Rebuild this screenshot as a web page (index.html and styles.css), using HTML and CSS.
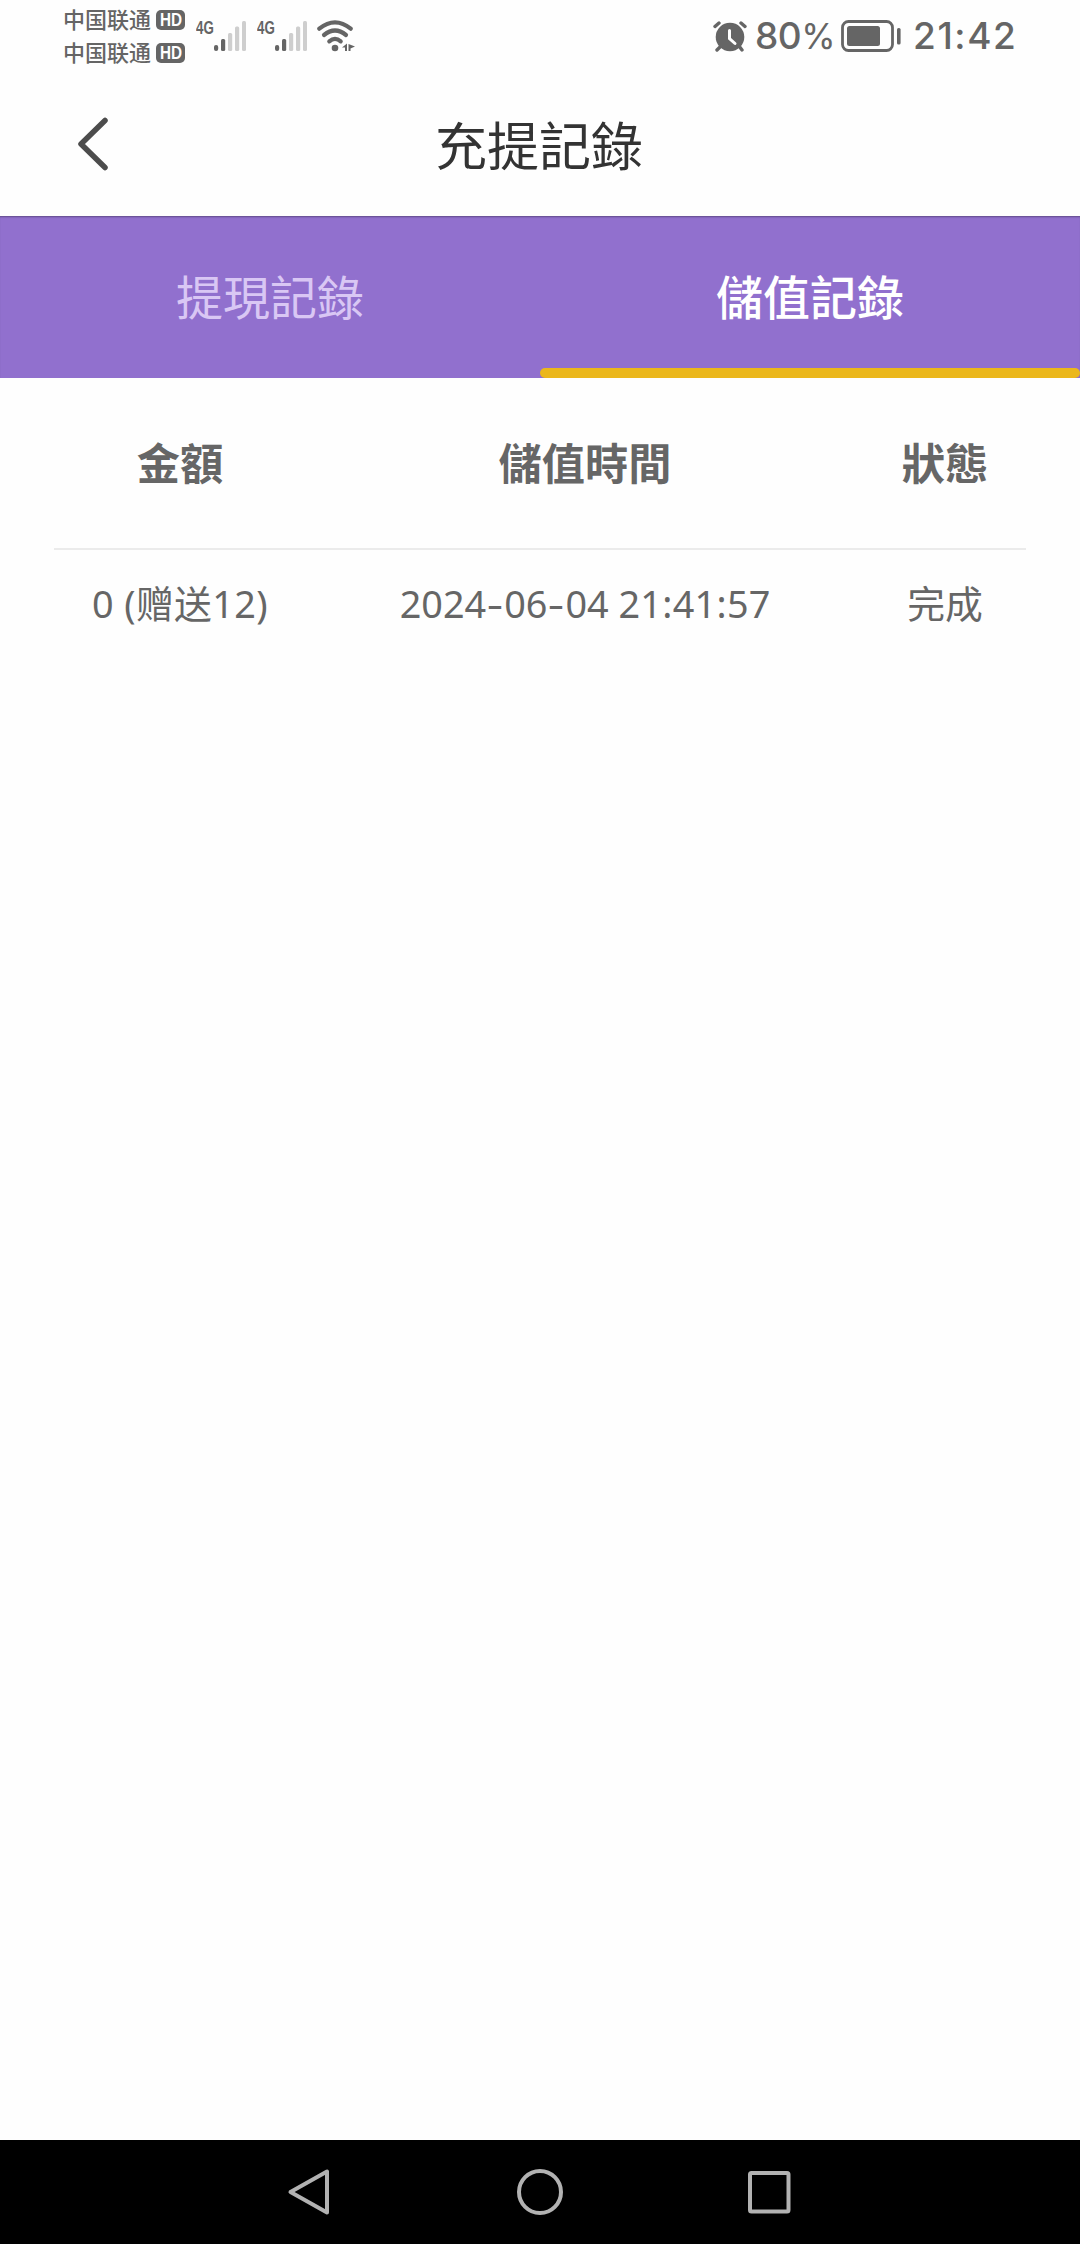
FILE: index.html
```html
<!DOCTYPE html>
<html lang="zh-Hant">
<head>
<meta charset="utf-8">
<title>充提記錄</title>
<link rel="stylesheet" href="styles.css">
</head>
<body>
<div class="screen">
  <div class="status">
    <div class="carriers" lang="zh-Hans">
      <div class="carrier"><span>中国联通</span><b class="hd"><span>HD</span></b></div>
      <div class="carrier"><span>中国联通</span><b class="hd"><span>HD</span></b></div>
    </div>
    <div class="signal">
      <span class="net">4G</span>
      <svg width="32" height="30" viewBox="0 0 32 30"><g fill="#656565"><rect x="0" y="24" width="4.2" height="6" rx="2"/><rect x="7" y="18" width="4.2" height="12" rx="1.5"/></g><g fill="#cecece"><rect x="14" y="12" width="4.2" height="18" rx="1.5"/><rect x="21" y="5.500" width="4.200" height="24.500" rx="1.5"/><rect x="28" y="0" width="4" height="30" rx="1.5"/></g></svg>
    </div>
    <div class="signal">
      <span class="net">4G</span>
      <svg width="32" height="30" viewBox="0 0 32 30"><g fill="#656565"><rect x="0" y="24" width="4.2" height="6" rx="2"/><rect x="7" y="18" width="4.2" height="12" rx="1.5"/></g><g fill="#cecece"><rect x="14" y="12" width="4.2" height="18" rx="1.5"/><rect x="21" y="5.500" width="4.200" height="24.500" rx="1.5"/><rect x="28" y="0" width="4" height="30" rx="1.5"/></g></svg>
    </div>
    <svg class="wifi" width="38" height="32" viewBox="0 0 38 32"><g fill="none" stroke="#656565" stroke-width="4.2" stroke-linecap="round"><path d="M2.300 8.700Q18 -4 33.700 8.700"/><path d="M7 15Q18 6 29 15"/><path d="M12.300 21.300Q18 16.500 23.700 21.300"/></g><circle cx="18" cy="28" r="3.300" fill="#656565"/><path fill="#656565" d="M25 27.500l5-4v7.500h-2v-3.500zM31.500 24v7h2v-2.500l4.500-2z"/></svg>
    <div class="right">
      <svg width="34" height="31" viewBox="0 0 34 31"><g stroke="#656565" stroke-width="3.400" stroke-linecap="round"><path d="M2 5.500L6 2M28 2l4 3.500M8 25l-4 4M26 25l3 4"/></g><circle cx="17" cy="16" r="14.300" fill="#656565"/><path d="M16.500 9.500v8l5.500 5" fill="none" stroke="#fff" stroke-width="3" stroke-linecap="round"/></svg>
      <span class="percent">80<small>%</small></span>
      <svg width="60" height="32" viewBox="0 0 60 32"><rect x="1.500" y="1.500" width="50" height="29" rx="6" fill="none" stroke="#656565" stroke-width="2.800"/><rect x="6" y="6" width="33" height="20" rx="2.500" fill="#656565"/><rect x="56" y="8" width="3.600" height="16.500" rx="1.600" fill="#656565"/></svg>
      <span class="time">21:42</span>
    </div>
  </div>

  <header class="header">
    <svg width="32" height="54" viewBox="0 0 32 54"><path d="M28 3.500L4 27l24 23.500" fill="none" stroke="#4c4c4c" stroke-width="5.500" stroke-linecap="round" stroke-linejoin="round"/></svg>
    <h1>充提記錄</h1>
  </header>

  <nav class="tabs">
    <a class="tab">提現記錄</a>
    <a class="tab active">儲值記錄</a>
  </nav>

  <main class="list">
    <div class="row head"><span>金額</span><span>儲值時間</span><span>狀態</span></div>
    <div class="row"><span class="amount" lang="zh-Hans">0 (赠送12)</span><span>2024<i>-</i>06<i>-</i>04 21<em>:</em>41<em>:</em>57</span><span>完成</span></div>
  </main>

  <footer class="navbar">
    <svg width="540" height="50" viewBox="0 0 540 50" fill="none" stroke="#b2b2b2" stroke-width="4"><path d="M57 4.500v41L20.500 25z" stroke-linejoin="round"/><circle cx="270" cy="25" r="21"/><rect x="480" y="6" width="38.500" height="38.500" rx="1.500"/></svg>
  </footer>
</div>
</body>
</html>
```
FILE: styles.css
```css
* { box-sizing: border-box; }
body { margin: 0; background: #fff; font-family: "Noto Sans", "Noto Sans CJK TC", sans-serif; }
svg { display: block; flex: none; }
.screen { display: flex; flex-direction: column; width: 1080px; height: 2244px; background: #fefefe; }

.status { display: flex; align-items: flex-start; height: 72px; padding: 0 61px 0 63px; color: #656565; }
.carriers { display: flex; flex-direction: column; gap: 1px; padding-top: 4px; font: 500 22px/28px "Noto Sans CJK SC", sans-serif; }
.carrier { display: flex; align-items: flex-start; gap: 5px; height: 32px; }
.hd { display: flex; justify-content: center; width: 29px; height: 20px; margin-top: 6px; border-radius: 5px; background: #656565; color: #fff; font: 700 18px/20px "Liberation Sans", sans-serif; }
.hd span { transform: scaleX(.85); }
.signal { display: flex; align-items: flex-start; width: 50px; margin: 21px 0 0 11px; }
.net { width: 18px; font: 700 18px/14px "Liberation Sans", sans-serif; transform: scaleX(.74); transform-origin: 0 0; }
.wifi { margin: 20px 0 0 10px; }
.right { display: flex; align-items: center; height: 72px; margin-left: auto; font: 500 37px/72px Inter, sans-serif; white-space: nowrap; }
.percent { width: 94px; padding-left: 8px; letter-spacing: -.5px; }
.percent small { font-size: 35px; font-weight: 400; }
.time { width: 118px; padding-left: 12px; letter-spacing: 1.6px; }

.header { display: grid; grid-template-columns: 180px 1fr 182px; align-items: center; height: 144px; }
.header svg { margin-left: 77px; }
.header h1 { margin: 0; color: #333; font: 400 52px/72px "Noto Sans CJK TC", sans-serif; text-align: center; }

.tabs { display: grid; grid-template-columns: 1fr 1fr; height: 162px; background: #9170ce; box-shadow: inset 0 2px 2px -1px #604a88; }
.tab { color: #d9c7f4; font: 400 47px/158px "Noto Sans CJK TC", sans-serif; text-align: center; }
.active { position: relative; color: #fff; font-weight: 500; }
.active::after { content: ""; position: absolute; left: 0; bottom: 0; width: 100%; height: 10px; border-radius: 5px; background: #ebb71b; }

.list { flex: 1; padding: 0 54px; color: #666; }
.row { display: grid; grid-template-columns: 252px 558px 162px; height: 110px; font-size: 37.8px; line-height: 107px; text-align: center; white-space: nowrap; }
.head { height: 172px; border-bottom: 2px solid #ebebeb; font-size: 43.2px; font-weight: 700; line-height: 171px; }
.row i { display: inline-block; width: 18px; font-style: normal; transform: scaleX(1.35); }
.row em { display: inline-block; width: 11px; font-style: normal; }
.amount { font-family: "Noto Sans", "Noto Sans CJK SC", sans-serif; letter-spacing: .4px; }

.navbar { display: flex; align-items: center; justify-content: center; height: 104px; background: #000; }
```
